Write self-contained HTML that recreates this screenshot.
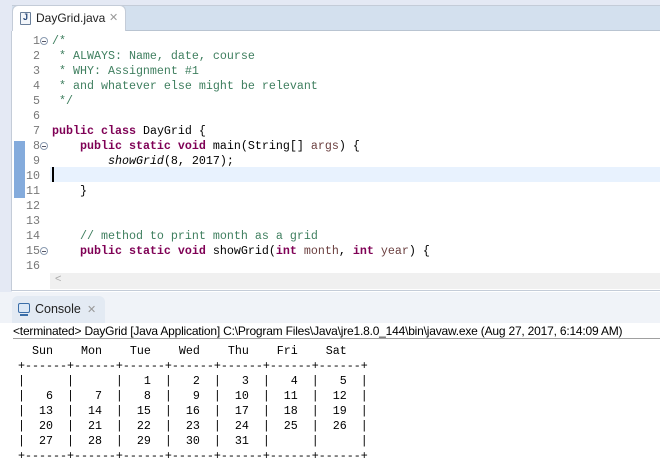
<!DOCTYPE html>
<html><head><style>
*{margin:0;padding:0;box-sizing:border-box}
body{width:660px;height:476px;overflow:hidden;background:#fff;font-family:"Liberation Sans",sans-serif;position:relative}
.abs{position:absolute}
.mono{font-family:"Liberation Mono",monospace;font-size:11.67px;line-height:15px;white-space:pre}
.kw{color:#7f0055;font-weight:bold}
.cm{color:#3f7f5f}
.num{color:#787878}
</style></head><body>
<div class="abs" style="left:0;top:0;width:660px;height:6px;background:#e4e9f4;border-bottom:1px solid #c4ccd8"></div>
<div class="abs" style="left:0;top:6px;width:660px;height:25px;background:#d3e0ee;border-bottom:1px solid #b9c4d1"></div>
<div class="abs" style="left:0;top:0;width:12px;height:300px;background:#e4e9f4"></div>
<div class="abs" style="left:12px;top:5px;width:114px;height:27px;background:#fff;border:1px solid #c4ccd8;border-bottom:none;border-radius:6px 6px 0 0"></div>
<div class="abs" style="left:20px;top:12px;width:11px;height:13px;border:1px solid #6a7f9a;background:#f3f6fa;border-radius:1px"></div>
<div class="abs" style="left:23px;top:12px;font-size:9px;color:#2a4a7a;font-weight:bold">J</div>
<div class="abs" style="left:36px;top:11px;font-size:12px;color:#222">DayGrid.java</div>
<div class="abs" style="left:109px;top:11px;font-size:11px;color:#999">✕</div>
<div class="abs" style="left:11px;top:31px;width:649px;height:260px;background:#fff;border-left:1px solid #c4ccd8;border-bottom:1px solid #c4ccd8"></div>
<div class="abs" style="left:14px;top:141px;width:11px;height:57px;background:#5b8fd0;opacity:.75"></div>
<div class="abs" style="left:50px;top:167px;width:610px;height:15px;background:#e8f2fe"></div>
<div class="abs" style="left:52px;top:167px;width:2px;height:15px;background:#000"></div>
<div class="abs mono num" style="left:20px;top:34px;text-align:right;width:20px">1
2
3
4
5
6
7
8
9
10
11
12
13
14
15
16</div>
<div class="abs" style="left:40px;top:37px;width:8px;height:8px;border:1px solid #8a9ab0;border-radius:50%;background:#fff"></div>
<div class="abs" style="left:42px;top:41px;width:4px;height:1px;background:#556"></div>
<div class="abs" style="left:40px;top:142px;width:8px;height:8px;border:1px solid #8a9ab0;border-radius:50%;background:#fff"></div>
<div class="abs" style="left:42px;top:146px;width:4px;height:1px;background:#556"></div>
<div class="abs" style="left:40px;top:247px;width:8px;height:8px;border:1px solid #8a9ab0;border-radius:50%;background:#fff"></div>
<div class="abs" style="left:42px;top:251px;width:4px;height:1px;background:#556"></div>
<div class="abs mono" style="left:52px;top:34px;color:#000"><span class="cm">/*
 * ALWAYS: Name, date, course
 * WHY: Assignment #1
 * and whatever else might be relevant
 */</span>

<span class="kw">public class</span> DayGrid {
    <span class="kw">public static void</span> main(String[] <span style="color:#6a3e3e">args</span>) {
        <i>showGrid</i>(8, 2017);

    }


    <span class="cm">// method to print month as a grid</span>
    <span class="kw">public static void</span> showGrid(<span class="kw">int</span> <span style="color:#6a3e3e">month</span>, <span class="kw">int</span> <span style="color:#6a3e3e">year</span>) {
</div>
<div class="abs" style="left:50px;top:273px;width:610px;height:16px;background:#f0f0f0"></div>
<div class="abs" style="left:55px;top:273px;font-size:11px;color:#aaa">&lt;</div>
<div class="abs" style="left:0;top:292px;width:660px;height:31px;background:#f0f3f8"></div>
<div class="abs" style="left:12px;top:296px;width:93px;height:27px;background:#e3eaf3;border-radius:6px 6px 0 0"></div>
<div class="abs" style="left:18px;top:303px;width:12px;height:10px;border:1.5px solid #3b6ea8;border-radius:2px;background:#dce8f6"></div>
<div class="abs" style="left:20px;top:314px;width:8px;height:2px;background:#3b6ea8"></div>
<div class="abs" style="left:35px;top:302px;font-size:12.5px;color:#222">Console</div>
<div class="abs" style="left:87px;top:303px;font-size:11px;color:#999">✕</div>
<div class="abs" style="left:13px;top:324px;width:647px;height:15px;border-bottom:1px solid #a0a0a0;font-size:12px;line-height:14px;color:#000;white-space:nowrap;letter-spacing:-0.2px">&lt;terminated&gt; DayGrid [Java Application] C:\Program Files\Java\jre1.8.0_144\bin\javaw.exe (Aug 27, 2017, 6:14:09 AM)</div>
<div class="abs mono" style="left:18px;top:344px;color:#000">  Sun    Mon    Tue    Wed    Thu    Fri    Sat
+------+------+------+------+------+------+------+
|      |      |   1  |   2  |   3  |   4  |   5  |
|   6  |   7  |   8  |   9  |  10  |  11  |  12  |
|  13  |  14  |  15  |  16  |  17  |  18  |  19  |
|  20  |  21  |  22  |  23  |  24  |  25  |  26  |
|  27  |  28  |  29  |  30  |  31  |      |      |
+------+------+------+------+------+------+------+</div>
</body></html>
